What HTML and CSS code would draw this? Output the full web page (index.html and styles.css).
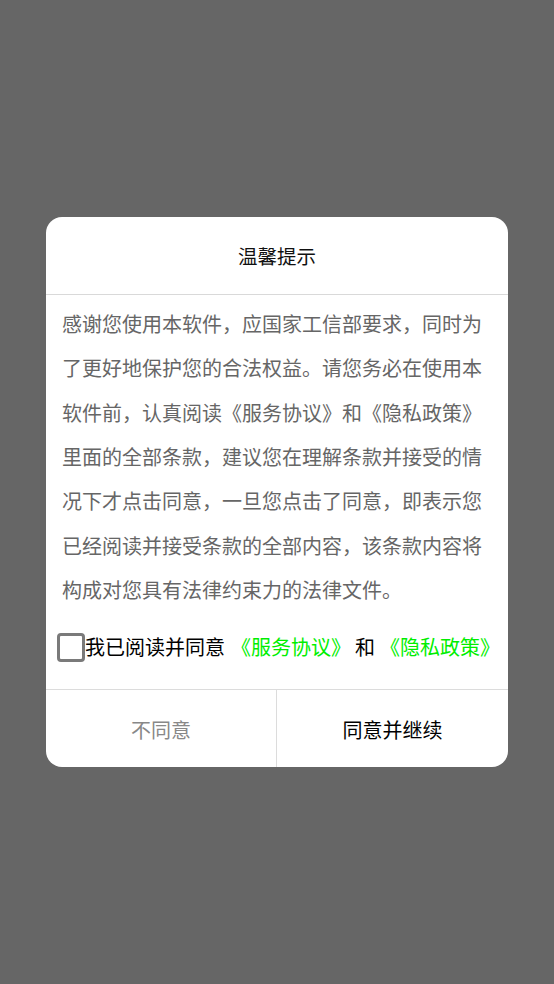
FILE: index.html
```html
<!DOCTYPE html>
<html lang="zh-CN">
<head>
<meta charset="utf-8">
<title>温馨提示</title>
<link rel="stylesheet" href="styles.css">
</head>
<body>
<div class="overlay">
  <div class="dialog">
    <div class="dialog-title">温馨提示</div>
    <div class="dialog-body">感谢您使用本软件，应国家工信部要求，同时为了更好地保护您的合法权益。请您务必在使用本软件前，认真阅读《服务协议》和《隐私政策》里面的全部条款，建议您在理解条款并接受的情况下才点击同意，一旦您点击了同意，即表示您已经阅读并接受条款的全部内容，该条款内容将构成对您具有法律约束力的法律文件。</div>
    <div class="agree-row">
      <span class="checkbox"></span>
      <span class="agree-text">我已阅读并同意<span class="link link-first">《服务协议》</span><span class="and">和</span><span class="link">《隐私政策》</span></span>
    </div>
    <div class="dialog-actions">
      <div class="btn btn-cancel">不同意</div>
      <div class="btn btn-ok">同意并继续</div>
    </div>
  </div>
</div>
</body>
</html>
```

FILE: styles.css
```css
* { box-sizing: border-box; }
html, body {
  margin: 0;
  padding: 0;
  height: 100%;
}
body {
  background: #666666;
  font-family: "Noto Sans CJK SC", "Noto Sans", sans-serif;
}
.overlay {
  height: 984px;
  display: flex;
  align-items: center;
  justify-content: center;
}
.dialog {
  width: 462px;
  height: 550px;
  background: #ffffff;
  border-radius: 16px;
  overflow: hidden;
  display: flex;
  flex-direction: column;
}
.dialog-title {
  height: 78px;
  border-bottom: 1px solid #d9d9d9;
  display: flex;
  align-items: center;
  justify-content: center;
  font-size: 19.5px;
  color: #111;
  padding-bottom: 1px;
}
.dialog-body {
  padding: 7px 16px 0 16px;
  font-size: 20px;
  line-height: 44.33px;
  color: #666666;
  height: 318px;
}
.agree-row {
  margin-top: 19px;
  height: 30px;
  padding-left: 11px;
  display: flex;
  align-items: center;
}
.checkbox {
  width: 28px;
  height: 29px;
  border: 3px solid #7a7a7a;
  border-radius: 4px;
  flex-shrink: 0;
}
.agree-text {
  font-size: 20px;
  color: #000;
  white-space: nowrap;
  line-height: 30px;
}
.link {
  color: #00ee00;
}
.link-first {
  margin-left: 6px;
}
.and {
  margin: 0 5px 0 4px;
}
.dialog-actions {
  margin-top: auto;
  height: 78px;
  border-top: 1px solid #dcdcdc;
  display: flex;
}
.btn {
  flex: 1;
  display: flex;
  align-items: center;
  justify-content: center;
  font-size: 20px;
  padding-top: 1px;
}
.btn-cancel {
  color: #888888;
  border-right: 1px solid #dcdcdc;
  flex: 0 0 231px;
}
.btn-ok {
  color: #000;
}
```
